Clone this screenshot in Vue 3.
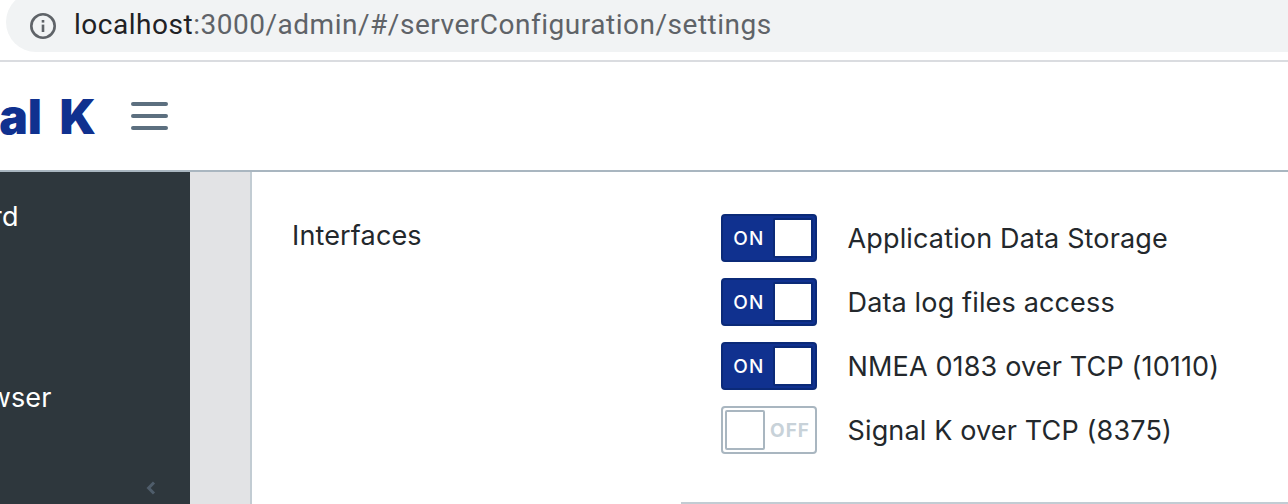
<script setup>
const toggles = [
  { label: 'Application Data Storage', on: true },
  { label: 'Data log files access', on: true },
  { label: 'NMEA 0183 over TCP (10110)', on: true },
  { label: 'Signal K over TCP (8375)', on: false },
]
</script>

<template>
  <div class="page">
    <div class="browser">
      <div class="omnibox">
        <svg class="info" width="28" height="28" viewBox="0 0 28 28" fill="none">
          <circle cx="14" cy="14" r="11.7" stroke="#5f6368" stroke-width="2.6" />
          <rect x="12.7" y="12.6" width="2.6" height="7.4" fill="#5f6368" />
          <rect x="12.7" y="8" width="2.6" height="2.6" fill="#5f6368" />
        </svg>
        <span class="url"><span class="host">localhost</span>:3000/admin/#/serverConfiguration/settings</span>
      </div>
    </div>
    <header class="topbar">
      <div class="brand"><span class="brand-text">Signal K</span></div>
      <div class="burger"><i></i><i></i><i></i></div>
    </header>
    <div class="body">
      <aside class="sidebar">
        <div class="nav">
          <div class="nav-item first">Dashboard</div>
          <div class="nav-item second">Data Browser</div>
        </div>
        <svg class="chevron" width="12" height="16" viewBox="0 0 12 16" fill="none">
          <path d="M9 2.5 3.6 8 9 13.5" stroke="#4f5d6b" stroke-width="3" />
        </svg>
      </aside>
      <div class="gutter"></div>
      <main class="content">
        <div class="form-row">
          <div class="label">Interfaces</div>
          <div class="options">
            <div v-for="t in toggles" :key="t.label" class="option">
              <span class="switch" :class="{ on: t.on }">
                <span v-if="!t.on" class="knob"></span>
                <span class="state">{{ t.on ? 'ON' : 'OFF' }}</span>
                <span v-if="t.on" class="knob"></span>
              </span>
              <span class="text">{{ t.label }}</span>
            </div>
          </div>
        </div>
        <div class="rule"></div>
      </main>
    </div>
  </div>
</template>

<style scoped>
.page {
  width: 1288px;
  height: 504px;
  overflow: hidden;
  display: flex;
  flex-direction: column;
  background: #fff;
  font-family: Inter, "Liberation Sans", sans-serif;
}
.browser {
  height: 60px;
  box-sizing: content-box;
  border-bottom: 2px solid #dadce0;
  overflow: hidden;
}
.omnibox {
  height: 60px;
  margin: -8px 0 0 6px;
  padding: 8px 0 0 23px;
  box-sizing: border-box;
  display: flex;
  align-items: center;
  gap: 17px;
  background: #f1f3f4;
  border-radius: 30px 0 0 30px;
}
.url {
  font-family: Roboto, sans-serif;
  font-size: 28px;
  line-height: 32px;
  margin-top: -2px;
  color: #5f6368;
  white-space: nowrap;
  letter-spacing: 0.52px;
}
.host {
  color: #202124;
}
.topbar {
  height: 108px;
  border-bottom: 2px solid #a9b6c0;
  display: flex;
  align-items: center;
}
.brand {
  width: 96px;
  display: flex;
  justify-content: flex-end;
  overflow: hidden;
}
.brand-text {
  font-size: 48px;
  font-weight: 900;
  color: #10318f;
  white-space: nowrap;
  flex: none;
  word-spacing: 8px;
}
.burger {
  margin-left: 35px;
  width: 37px;
  display: flex;
  flex-direction: column;
  gap: 8px;
}
.burger i {
  display: block;
  height: 4px;
  border-radius: 2px;
  background: #5c6f7f;
}
.body {
  flex: 1;
  display: flex;
  min-height: 0;
}
.sidebar {
  width: 190px;
  background: #2e373d;
  color: #fff;
  display: flex;
  flex-direction: column;
  justify-content: space-between;
  overflow: hidden;
}
.nav {
  display: flex;
  flex-direction: column;
  align-items: flex-end;
}
.nav-item {
  font-size: 27px;
  letter-spacing: 0.15px;
  line-height: 32px;
  white-space: nowrap;
  align-self: flex-start;
}
.first {
  margin: 29px 0 0 -122px;
}
.second {
  margin: 149px 0 0 -122px;
}
.chevron {
  align-self: flex-end;
  margin: 0 33px 8px 0;
}
.gutter {
  width: 60px;
  background: #e2e3e5;
  border-right: 2px solid #c2ccd3;
}
.content {
  flex: 1;
  padding-left: 40px;
  display: flex;
  flex-direction: column;
  justify-content: space-between;
}
.form-row {
  display: flex;
  padding-top: 42px;
}
.label {
  width: 429px;
  font-size: 27px;
  letter-spacing: 0.15px;
  line-height: 44px;
  color: #23282c;
}
.options {
  display: flex;
  flex-direction: column;
  gap: 16px;
}
.option {
  display: flex;
  align-items: center;
  height: 48px;
}
.switch {
  box-sizing: border-box;
  width: 96px;
  height: 48px;
  border: 2px solid #a9b6c0;
  border-radius: 4px;
  padding: 2px;
  display: flex;
  align-items: stretch;
  color: #c8d2d9;
  background: #fff;
}
.switch.on {
  background: #10318f;
  border-color: #0b2a78;
  color: #fff;
}
.state {
  flex: 1;
  display: flex;
  align-items: center;
  justify-content: center;
  font-size: 19px;
  font-weight: 700;
  letter-spacing: 1px;
  padding-left: 2px;
}
.on .state {
  font-weight: 500;
  letter-spacing: 1.2px;
  padding-left: 0;
}
.knob {
  box-sizing: border-box;
  width: 40px;
  border: 2px solid #a9b6c0;
  border-radius: 2px;
  background: #fff;
}
.on .knob {
  border-color: #0b2a78;
}
.text {
  margin-left: 30.5px;
  font-size: 27px;
  letter-spacing: 0.15px;
  color: #23282c;
  white-space: nowrap;
}
.rule {
  height: 2px;
  margin-left: 389px;
  background: #c2ccd3;
}
</style>
